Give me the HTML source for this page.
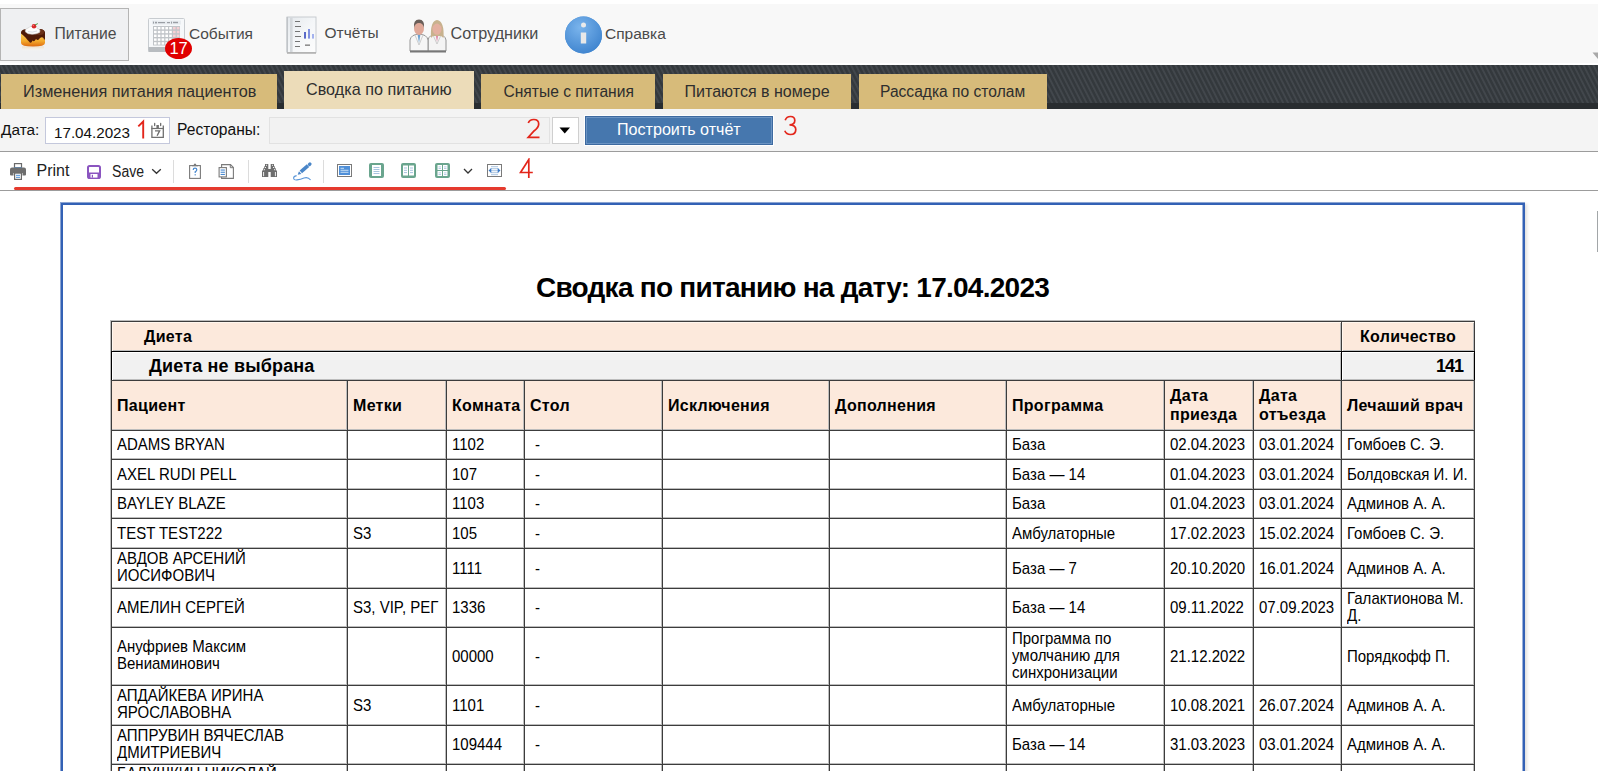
<!DOCTYPE html><html><head><meta charset="utf-8"><style>

*{margin:0;padding:0;box-sizing:border-box}
html,body{width:1598px;height:780px;overflow:hidden;background:#fff;font-family:"Liberation Sans",sans-serif;}
.abs{position:absolute}
.t{position:absolute;white-space:nowrap;font-size:15px;line-height:17px;color:#000}
.b{font-weight:bold}
.ui{position:absolute;white-space:nowrap;font-size:15.5px;line-height:18px;color:#333}
.hl{position:absolute;background:#3c3c3c;height:1px}
.vl{position:absolute;background:#3c3c3c;width:1px}

</style></head><body>
<div class="abs" style="left:0;top:4px;width:1598px;height:61px;background:#f8f8f8"></div>
<div class="abs" style="left:0;top:63px;width:1598px;height:2px;background:#fff"></div>
<div class="abs" style="left:0;top:8px;width:129px;height:53px;background:#eff0f2;border:1px solid #b4b4b4"></div>
<div class="ui" style="left:54.5px;top:24.56px;font-size:15.7px;color:#4a4a4a;">Питание</div>
<div class="ui" style="left:189px;top:24.63px;font-size:15.5px;color:#4a4a4a;">События</div>
<div class="ui" style="left:324.5px;top:24.23px;font-size:15.5px;color:#4a4a4a;">Отчёты</div>
<div class="ui" style="left:450.5px;top:24.39px;font-size:16.2px;color:#4a4a4a;">Сотрудники</div>
<div class="ui" style="left:605px;top:24.63px;font-size:15.5px;color:#4a4a4a;">Справка</div>
<svg class="abs" style="left:20px;top:22px" width="26" height="30" viewBox="0 0 26 30">
<defs><linearGradient id="cb" x1="0" y1="0" x2="0" y2="1"><stop offset="0" stop-color="#fcd060"/><stop offset=".6" stop-color="#f3a92a"/><stop offset="1" stop-color="#de6a10"/></linearGradient>
<linearGradient id="rf" x1="0" y1="0" x2="0" y2="1"><stop offset="0" stop-color="#f0d8b0" stop-opacity=".7"/><stop offset="1" stop-color="#fff" stop-opacity="0"/></linearGradient></defs>
<rect x="2" y="24.5" width="22" height="5" fill="url(#rf)"/>
<path d="M1 11 L1 21 Q1 24.5 13 24.5 Q25 24.5 25 21 L25 11Z" fill="url(#cb)"/>
<path d="M1 10.5 Q1 7.5 6 7 L20 7 Q25 7.5 25 10.5 L25 17 Q24 19 23.5 16 Q22 14.5 20 16 Q18 19.5 16 17 Q14 20.5 12.5 18.5 Q11 22.5 9 19.5 Q7 17.5 5.5 15.5 Q3 13 1 11.5Z" fill="#4e1a08"/>
<ellipse cx="19.5" cy="10" rx="4.5" ry="3" fill="#6a3018"/>
<path d="M5.5 10 Q4.5 6.5 8.5 6 Q9.5 3.8 12.5 4.2 Q17 3.8 17.5 6.5 Q21 7 19.5 10.5 Q16 12.5 12 12.3 Q7.5 12.3 5.5 10Z" fill="#fdfdfd" stroke="#c8c8c8" stroke-width=".6"/>
<path d="M8 9.5 Q12 11 17 9" fill="none" stroke="#d8dde4" stroke-width="1"/>
<circle cx="14" cy="4.2" r="2.3" fill="#d82828"/>
<circle cx="13.3" cy="3.6" r=".7" fill="#ff8080"/>
<path d="M15 3 L17.8 1.6" stroke="#4a9a40" stroke-width="1"/>
</svg>
<svg class="abs" style="left:148px;top:18px" width="37" height="35" viewBox="0 0 37 35">
<rect x="0.5" y="0.5" width="36" height="33" rx="1" fill="#f6f8fa" stroke="#c8ccd0"/>
<rect x="0.5" y="29" width="36" height="5" fill="#b8bcc0"/>
<rect x="4" y="2.5" width="29" height="4" fill="#e8ecf0"/><g fill="#9a9ea4"><rect x="5" y="3.6" width="1" height="2"/><rect x="7" y="3.8" width="2" height="1.6"/><rect x="10" y="4" width="7" height="1.2"/><rect x="19" y="4" width="3" height="1.2"/><rect x="23" y="3.6" width="1" height="2"/><rect x="25" y="3.8" width="5" height="1.4"/></g>
<rect x="5" y="8" width="27" height="19.5" fill="#c0c4c8"/>
<rect x="6.0" y="9.0" width="2.6" height="2.4" fill="#fff"/><rect x="9.8" y="9.0" width="2.6" height="2.4" fill="#fff"/><rect x="13.6" y="9.0" width="2.6" height="2.4" fill="#fff"/><rect x="17.4" y="9.0" width="2.6" height="2.4" fill="#fff"/><rect x="21.2" y="9.0" width="2.6" height="2.4" fill="#fff"/><rect x="25.0" y="9.0" width="2.6" height="2.4" fill="#f6d0d4"/><rect x="28.8" y="9.0" width="2.6" height="2.4" fill="#f6d0d4"/><rect x="6.0" y="12.8" width="2.6" height="2.4" fill="#fff"/><rect x="9.8" y="12.8" width="2.6" height="2.4" fill="#fff"/><rect x="13.6" y="12.8" width="2.6" height="2.4" fill="#fff"/><rect x="17.4" y="12.8" width="2.6" height="2.4" fill="#fff"/><rect x="21.2" y="12.8" width="2.6" height="2.4" fill="#fff"/><rect x="25.0" y="12.8" width="2.6" height="2.4" fill="#f6d0d4"/><rect x="28.8" y="12.8" width="2.6" height="2.4" fill="#f6d0d4"/><rect x="6.0" y="16.6" width="2.6" height="2.4" fill="#fff"/><rect x="9.8" y="16.6" width="2.6" height="2.4" fill="#fff"/><rect x="13.6" y="16.6" width="2.6" height="2.4" fill="#fff"/><rect x="17.4" y="16.6" width="2.6" height="2.4" fill="#fff"/><rect x="21.2" y="16.6" width="2.6" height="2.4" fill="#fff"/><rect x="25.0" y="16.6" width="2.6" height="2.4" fill="#f6d0d4"/><rect x="28.8" y="16.6" width="2.6" height="2.4" fill="#f6d0d4"/><rect x="6.0" y="20.4" width="2.6" height="2.4" fill="#fff"/><rect x="9.8" y="20.4" width="2.6" height="2.4" fill="#fff"/><rect x="13.6" y="20.4" width="2.6" height="2.4" fill="#fff"/><rect x="17.4" y="20.4" width="2.6" height="2.4" fill="#fff"/><rect x="21.2" y="20.4" width="2.6" height="2.4" fill="#fff"/><rect x="25.0" y="20.4" width="2.6" height="2.4" fill="#f6d0d4"/><rect x="28.8" y="20.4" width="2.6" height="2.4" fill="#f6d0d4"/><rect x="6.0" y="24.2" width="2.6" height="2.4" fill="#fff"/><rect x="9.8" y="24.2" width="2.6" height="2.4" fill="#fff"/><rect x="13.6" y="24.2" width="2.6" height="2.4" fill="#fff"/><rect x="17.4" y="24.2" width="2.6" height="2.4" fill="#fff"/><rect x="21.2" y="24.2" width="2.6" height="2.4" fill="#fff"/><rect x="25.0" y="24.2" width="2.6" height="2.4" fill="#f6d0d4"/><rect x="28.8" y="24.2" width="2.6" height="2.4" fill="#f6d0d4"/>
</svg>
<div class="abs" style="left:165px;top:38px;width:27px;height:21px;border-radius:50%;background:#e00000"></div>
<div class="abs" style="left:165px;top:38px;width:27px;height:21px;color:#fff;font-size:16.5px;line-height:21px;text-align:center;letter-spacing:-0.3px">17</div>
<svg class="abs" style="left:286px;top:16px" width="31" height="38" viewBox="0 0 31 38">
<defs><linearGradient id="rg" x1="0" y1="0" x2="1" y2="1"><stop offset="0" stop-color="#e4e8ec"/><stop offset=".5" stop-color="#f4f6f8"/><stop offset="1" stop-color="#fdfdfd"/></linearGradient></defs>
<rect x="1" y="1" width="29" height="35.5" fill="url(#rg)" stroke="#c4c8cc" stroke-width=".9"/>
<rect x="1" y="36" width="29" height="1.8" fill="#b4b4b4"/>
<rect x="0.5" y="1" width="1.5" height="35" fill="#c0c4c8"/>
<rect x="4" y="1.5" width="2.6" height="34.5" fill="#d4d8dc"/>
<g fill="#666"><rect x="9" y="5" width="5" height=".9"/><rect x="9" y="10" width="6" height=".9"/><rect x="9" y="15" width="5" height=".9"/><rect x="9" y="20" width="6" height=".9"/><rect x="9" y="25" width="5" height=".9"/><rect x="9" y="30" width="5" height=".9"/></g>
<rect x="18" y="16" width="2" height="6.6" fill="#5a6ac8"/><rect x="22" y="13" width="2" height="9.6" fill="#8090e0"/><rect x="26" y="18" width="2" height="4.6" fill="#a4b2ee"/>
<rect x="19" y="28.5" width="5" height="1.3" fill="#777"/>
</svg>
<svg class="abs" style="left:409px;top:18px" width="38" height="35" viewBox="0 0 38 35">
<path d="M19 33 L19 22 Q20 16.5 28 16 Q36 16.5 37 22 L37 33Z" fill="#f4f4f4" stroke="#8a8a8a" stroke-width=".9"/>
<path d="M1 33 L1 22 Q2 16.5 10 16 Q18 16.5 19 22 L19 33Z" fill="#f6f6f6" stroke="#8a8a8a" stroke-width=".9"/>
<rect x="1" y="32.5" width="36" height="2" fill="#777"/>
<path d="M8.5 16 L10 25 L11.5 16Z" fill="#6aa0d0"/><path d="M26.5 16 L28 24 L29.5 16Z" fill="#e08aa8"/>
<path d="M6 17 L10 27 L14 17" fill="none" stroke="#bbb" stroke-width=".7"/>
<path d="M24 17 L28 26 L32 17" fill="none" stroke="#bbb" stroke-width=".7"/>
<path d="M22 20 Q21 3 28 2 Q35.5 3 34.5 20 L32 18 L24 18Z" fill="#c8b28e"/>
<ellipse cx="28" cy="10.5" rx="4.6" ry="6.3" fill="#e4b0a0"/>
<path d="M23.5 9 Q23.5 3 28 3 Q32.5 3 32.5 9 Q30 5.5 28 5.5 Q25.5 5.5 23.5 9Z" fill="#c8b28e"/>
<ellipse cx="10" cy="10.5" rx="5" ry="6.5" fill="#e0a898"/>
<path d="M5 10 Q4 1.5 10 1.5 Q16 1.5 15 10 Q14 5 10 5 Q6 5 5 10Z" fill="#6a5e58"/>
</svg>
<svg class="abs" style="left:564px;top:16px" width="39" height="38" viewBox="0 0 39 38">
<circle cx="19.5" cy="19" r="18.5" fill="#4a90d8"/>
<circle cx="19.5" cy="19" r="18.5" fill="url(#ig)"/>
<defs><radialGradient id="ig" cx=".4" cy=".3" r=".8"><stop offset="0" stop-color="#7ab4ec"/><stop offset="1" stop-color="#3a80cc"/></radialGradient></defs>
<circle cx="19.5" cy="9" r="2.5" fill="#eaeaea"/>
<rect x="16.8" y="16.5" width="5.4" height="11" fill="#e8e8e8"/>
</svg>
<svg class="abs" style="left:1592px;top:52px" width="8" height="8" viewBox="0 0 8 8"><path d="M0.5 0.5 L10 0.5 L6 7Z" fill="#a8a8a8"/></svg>
<div class="abs" style="left:0;top:65px;width:1598px;height:44px;background:repeating-linear-gradient(63deg,#33383c 0px,#34393d 1.6px,#42474c 2.4px,#42474c 3.4px,#33383c 4.38px)"></div>
<div class="abs" style="left:0;top:103px;width:1598px;height:6px;background:#292d30"></div>
<div class="abs" style="left:1px;top:74px;width:276px;height:35px;background:#d7bb7a"></div>
<div class="ui" style="left:23px;top:82.37px;font-size:16.25px;color:#2e2e2e;">Изменения питания пациентов</div>
<div class="abs" style="left:284px;top:71px;width:190px;height:38px;background:#ecdcb9"></div>
<div class="ui" style="left:306px;top:80.39px;font-size:16.2px;color:#2e2e2e;">Сводка по питанию</div>
<div class="abs" style="left:481px;top:74px;width:174px;height:35px;background:#d7bb7a"></div>
<div class="ui" style="left:503.5px;top:82.59px;font-size:15.6px;color:#2e2e2e;">Снятые с питания</div>
<div class="abs" style="left:663px;top:74px;width:188px;height:35px;background:#d7bb7a"></div>
<div class="ui" style="left:684.5px;top:82.44px;font-size:16.05px;color:#2e2e2e;">Питаются в номере</div>
<div class="abs" style="left:859px;top:74px;width:188px;height:35px;background:#d7bb7a"></div>
<div class="ui" style="left:880px;top:82.59px;font-size:15.6px;color:#2e2e2e;">Рассадка по столам</div>
<div class="abs" style="left:0;top:109px;width:1598px;height:42px;background:#f4f4f4"></div>
<div class="abs" style="left:0;top:151px;width:1598px;height:1px;background:#9c9c9c"></div>
<div class="ui" style="left:1px;top:120.66px;font-size:15.4px;color:#111;">Дата:</div>
<div class="abs" style="left:45px;top:117px;width:125px;height:27px;background:#fff;border:1px solid #c4c8dc"></div>
<div class="ui" style="left:54px;top:123.73px;font-size:15.2px;color:#111;">17.04.2023</div>
<svg class="abs" style="left:136px;top:119px" width="10" height="22" viewBox="0 0 10 22"><path d="M2.3 7.4 L7.2 2.6 L7.2 19.6" fill="none" stroke="#e3261b" stroke-width="1.9"/></svg>
<svg class="abs" style="left:150px;top:122px" width="15" height="17" viewBox="0 0 15 17">
<path d="M1.9 3.5 L1.9 15.4 L13.3 15.4 L13.3 3.5" fill="none" stroke="#707070" stroke-width="1.3"/>
<rect x="1.3" y="5.9" width="12.6" height="1.2" fill="#707070"/>
<rect x="4" y="0.8" width="1.3" height="3.4" rx=".6" fill="#707070"/><rect x="10" y="0.8" width="1.3" height="3.4" rx=".6" fill="#707070"/>
<rect x="6.4" y="3" width="2.5" height="3" fill="#707070"/>
<path d="M5 8.9 L9.6 8.9 L7.1 13.8" fill="none" stroke="#707070" stroke-width="1.4"/>
</svg>
<div class="ui" style="left:177px;top:120.59px;font-size:15.6px;color:#111;">Рестораны:</div>
<div class="abs" style="left:269px;top:117px;width:281px;height:27px;background:#f2f2f2;border:1px solid #e2e2e2"></div>
<svg class="abs" style="left:526px;top:118px" width="16" height="22" viewBox="0 0 16 22"><path d="M2.3 5 Q3.5 1.5 7.8 1.5 Q12.7 1.5 12.7 6 Q12.7 9.5 8 13 L2.2 19.3 L13.5 19.3" fill="none" stroke="#e3261b" stroke-width="1.7"/></svg>
<div class="abs" style="left:552px;top:117px;width:27px;height:27px;background:#fff;border:1px solid #cfcfcf"></div>
<svg class="abs" style="left:559px;top:127px" width="12" height="7" viewBox="0 0 12 7"><path d="M0.5 0.5 L11 0.5 L5.75 6.5Z" fill="#000"/></svg>
<div class="abs" style="left:584px;top:115px;width:190px;height:31px;background:#fff"></div>
<div class="abs" style="left:585px;top:116px;width:188px;height:29px;background:#4677ae;border:1px solid #3d6aa0;box-shadow:inset 0 0 0 1px #6b93c2"></div>
<div class="ui" style="left:617px;top:120.42px;font-size:16.1px;color:#fff;">Построить отчёт</div>
<svg class="abs" style="left:783px;top:115px" width="16" height="22" viewBox="0 0 16 22"><path d="M2.2 5.2 Q3.5 1.5 7.5 1.5 Q11.8 1.5 11.8 5.5 Q11.8 9.5 6.5 9.8 Q12.8 10 12.8 14.5 Q12.8 19.5 7.5 19.5 Q3.2 19.5 1.8 15.8" fill="none" stroke="#e3261b" stroke-width="1.7"/></svg>
<div class="abs" style="left:0;top:152px;width:1598px;height:38px;background:#fff"></div>
<div class="abs" style="left:0;top:190px;width:1598px;height:1px;background:#9c9c9c"></div>
<div class="abs" style="left:14px;top:187px;width:492px;height:3px;background:#e53a2e;border-radius:2px"></div>
<svg class="abs" style="left:10px;top:163px" width="16" height="17" viewBox="0 0 16 17">
<rect x="4.5" y="0.6" width="7" height="4.6" fill="#fff" stroke="#6a6a6a" stroke-width="1.2"/>
<rect x="4" y="4.2" width="8" height="1" fill="#4a90d8"/>
<path d="M2 4.5 L14 4.5 Q16 4.5 16 6.5 L16 11.5 Q16 12.5 15 12.5 L12.5 12.5 L12.5 10 L3.5 10 L3.5 12.5 L1 12.5 Q0 12.5 0 11.5 L0 6.5 Q0 4.5 2 4.5Z" fill="#6e6e6e"/>
<rect x="4.6" y="10.1" width="6.8" height="6.3" fill="#fff" stroke="#6a6a6a" stroke-width="1.2"/>
<rect x="6" y="11.8" width="4" height="1" fill="#4a90d8"/><rect x="6" y="13.8" width="4" height="1" fill="#4a90d8"/>
</svg>
<div class="ui" style="left:36.5px;top:162.46px;font-size:16px;color:#222;">Print</div>
<svg class="abs" style="left:87px;top:165px" width="14" height="14" viewBox="0 0 14 14">
<rect x="1" y="1" width="12" height="12" rx="1.6" fill="none" stroke="#8b55c0" stroke-width="2"/>
<rect x="2" y="7.5" width="10" height="5.5" fill="#8b55c0"/>
<rect x="3.5" y="9" width="7" height="3.6" fill="#fff"/>
<rect x="4.8" y="9.8" width="1.2" height="2.8" fill="#8b55c0"/>
</svg>
<div class="ui" style="left:112px;top:162.53px;font-size:15.8px;color:#222;transform:scaleX(0.89);transform-origin:0 0;">Save</div>
<svg class="abs" style="left:151px;top:168px" width="11" height="7" viewBox="0 0 11 7"><path d="M1.2 1.2 L5.5 5.3 L9.8 1.2" fill="none" stroke="#333" stroke-width="1.3"/></svg>
<div class="abs" style="left:173px;top:160px;width:1px;height:23px;background:#dcdcdc"></div>
<div class="abs" style="left:248px;top:160px;width:1px;height:23px;background:#dcdcdc"></div>
<div class="abs" style="left:323px;top:160px;width:1px;height:23px;background:#dcdcdc"></div>
<svg class="abs" style="left:189px;top:163px" width="12" height="16" viewBox="0 0 12 16">
<rect x="0.6" y="2.6" width="10.8" height="12.8" fill="#fff" stroke="#7a7a7a" stroke-width="1.1"/>
<path d="M3 3.2 L9 3.2 L9 2 L7.3 2 Q7.3 0.4 6 0.4 Q4.7 0.4 4.7 2 L3 2Z" fill="#7a7a7a"/>
<path d="M4.2 7 Q4.2 5.2 6 5.2 Q7.8 5.2 7.8 6.8 Q7.8 8 6.2 8.7 L6.2 10" fill="none" stroke="#4a8ad0" stroke-width="1.2"/>
<rect x="5.6" y="11.2" width="1.2" height="1.2" fill="#4a8ad0"/>
</svg>
<svg class="abs" style="left:218px;top:163px" width="17" height="17" viewBox="0 0 17 17">
<path d="M3.6 1.6 L12.5 1.6 L15.4 4.5 L15.4 15.4 L3.6 15.4Z" fill="#fff" stroke="#7a7a7a" stroke-width="1.1"/>
<path d="M12.3 1.6 L12.3 4.7 L15.4 4.7" fill="none" stroke="#7a7a7a" stroke-width="1"/>
<rect x="1.1" y="4.6" width="7.3" height="9.3" fill="#fff" stroke="#7a7a7a" stroke-width="1.1"/>
<g fill="#4a8ad0"><rect x="2.6" y="6.5" width="4.3" height="1.1"/><rect x="2.6" y="8.7" width="4.3" height="1.1"/><rect x="2.6" y="10.9" width="4.3" height="1.1"/></g>
</svg>
<svg class="abs" style="left:262px;top:164px" width="15" height="13" viewBox="0 0 15 13">
<path d="M3 0 H6.3 V5 H8.7 V0 H12 V2.3 H12.8 V4.3 H13.8 V6.6 H15 V13 H8.7 V8 H6.3 V13 H0 V6.6 H1.2 V4.3 H2.2 V2.3 H3 Z" fill="#6e6e6e"/>
<g fill="#fff" opacity=".9"><rect x="1.1" y="8" width="1" height="4.2"/><rect x="12.9" y="8" width="1" height="4.2"/><rect x="4" y="0.8" width="1" height="1"/><rect x="10" y="0.8" width="1" height="1"/><rect x="3" y="3" width="1" height="1"/><rect x="11" y="3" width="1" height="1"/><rect x="2" y="5.2" width="1" height="1"/><rect x="12" y="5.2" width="1" height="1"/></g>
</svg>
<svg class="abs" style="left:292px;top:161px" width="20" height="20" viewBox="0 0 20 20">
<path d="M5.7 13.7 L6.99 10.17 L9.35 12.89Z" fill="#4a86c8"/>
<path d="M8.84 10.94 L16.02 4.71" stroke="#4a86c8" stroke-width="3.6"/>
<path d="M17.5 3.4 L17.9 3.05" stroke="#4a86c8" stroke-width="3.3" stroke-linecap="round"/>
<path d="M4.6 14.6 Q1.6 15.2 1.6 17 Q1.7 19.3 5 18.9 Q8.5 18.5 12 17 Q16 15.6 18.6 19" fill="none" stroke="#5a96d8" stroke-width="1.1"/>
</svg>
<svg class="abs" style="left:337px;top:164px" width="15" height="13" viewBox="0 0 15 13">
<rect x="0.5" y="0.5" width="14" height="12" fill="#fff" stroke="#7a7a7a" stroke-width="1"/>
<rect x="2" y="2" width="11" height="9" fill="#4f8fd8"/>
<g fill="#d8e8f8"><rect x="3.5" y="3.8" width="3.5" height="0.9"/><rect x="3.5" y="5.8" width="8" height="0.9"/><rect x="3.5" y="7.8" width="8" height="0.9"/></g>
</svg>
<svg class="abs" style="left:369px;top:163px" width="15" height="15" viewBox="0 0 15 15"><rect x="0" y="0" width="15" height="15" rx="2" fill="#6aa58e"/><rect x="3" y="2" width="9" height="11" fill="#fff"/><g fill="#a8c4e0"><rect x="4.5" y="4" width="6" height="1"/><rect x="4.5" y="6" width="6" height="1"/><rect x="4.5" y="8" width="6" height="1"/><rect x="4.5" y="10" width="6" height="1"/></g></svg>
<svg class="abs" style="left:401px;top:163px" width="15" height="15" viewBox="0 0 15 15"><rect x="0" y="0" width="15" height="15" rx="2" fill="#6aa58e"/><rect x="2" y="2.5" width="5" height="10" fill="#fff"/><rect x="8" y="2.5" width="5" height="10" fill="#fff"/><g fill="#a8c4e0"><rect x="3" y="4.5" width="3" height="1"/><rect x="3" y="6.8" width="3" height="1"/><rect x="3" y="9.1" width="3" height="1"/><rect x="9" y="4.5" width="3" height="1"/><rect x="9" y="6.8" width="3" height="1"/><rect x="9" y="9.1" width="3" height="1"/></g></svg>
<svg class="abs" style="left:435px;top:163px" width="15" height="15" viewBox="0 0 15 15"><rect x="0" y="0" width="15" height="15" rx="2" fill="#6aa58e"/><rect x="2.5" y="2" width="4.5" height="5" fill="#fff"/><rect x="8" y="2" width="4.5" height="5" fill="#fff"/><rect x="2.5" y="8" width="4.5" height="5" fill="#fff"/><rect x="8" y="8" width="4.5" height="5" fill="#fff"/><g fill="#a8c4e0"><rect x="3.5" y="3.5" width="2.5" height="0.8"/><rect x="3.5" y="5" width="2.5" height="0.8"/><rect x="9" y="3.5" width="2.5" height="0.8"/><rect x="9" y="5" width="2.5" height="0.8"/><rect x="3.5" y="9.5" width="2.5" height="0.8"/><rect x="3.5" y="11" width="2.5" height="0.8"/><rect x="9" y="9.5" width="2.5" height="0.8"/><rect x="9" y="11" width="2.5" height="0.8"/></g></svg>
<svg class="abs" style="left:463px;top:168px" width="10" height="6" viewBox="0 0 10 6"><path d="M1 1 L5 5 L9 1" fill="none" stroke="#333" stroke-width="1.3"/></svg>
<svg class="abs" style="left:487px;top:164px" width="15" height="13" viewBox="0 0 15 13">
<rect x="0.5" y="0.5" width="14" height="12" fill="#fff" stroke="#7a7a7a" stroke-width="1"/>
<g fill="#a8c4e0"><rect x="4" y="2.2" width="7" height="1"/><rect x="3.5" y="4.2" width="8" height="1"/><rect x="3.5" y="6.2" width="8" height="1"/><rect x="3.5" y="8.2" width="8" height="1"/><rect x="4" y="10.2" width="7" height="1"/></g>
<path d="M1.5 6.5 L4.3 4 L4.3 9Z M13.5 6.5 L10.7 4 L10.7 9Z" fill="#3a7ac8"/>
</svg>
<svg class="abs" style="left:519px;top:158px" width="16" height="22" viewBox="0 0 16 22"><path d="M9.8 20 L9.8 1.5 L1.5 14.5 L13.8 14.5" fill="none" stroke="#e3261b" stroke-width="1.7"/></svg>
<div class="abs" style="left:1597px;top:211px;width:1px;height:41px;background:#a2a6a8"></div>
<div class="abs" style="left:0;top:191px;width:1598px;height:580px;overflow:hidden">
<div class="abs" style="left:61px;top:12px;width:1464px;height:700px;border:2px solid #3361b5;box-shadow:2px 1px 3px rgba(60,50,40,.16)"></div>
<div class="abs" style="left:60px;top:11px;width:1px;height:700px;background:#8ba4d2"></div>
<div class="abs" style="left:60px;top:11px;width:1465px;height:1px;background:#8ba4d2"></div>
<div class="abs" style="left:1522px;top:14px;width:1px;height:700px;background:#9ab0da"></div>
<div class="t b" style="left:536px;top:88.25px;font-size:28px;color:#000;letter-spacing:-0.74px;">Сводка по питанию на дату: 17.04.2023</div>
<div class="abs" style="left:111px;top:130px;width:1363px;height:30px;background:#fce9dc"></div>
<div class="abs" style="left:111px;top:160px;width:1363px;height:29px;background:#f1f1f1"></div>
<div class="abs" style="left:111px;top:189px;width:1363px;height:50px;background:#fce9dc"></div>
<div class="abs" style="left:110px;top:129px;width:1365px;height:1px;background:#bdbdbd"></div>
<div class="abs" style="left:110px;top:159px;width:1365px;height:1px;background:#bdbdbd"></div>
<div class="abs" style="left:110px;top:188px;width:1365px;height:1px;background:#bdbdbd"></div>
<div class="abs" style="left:110px;top:238px;width:1365px;height:1px;background:#bdbdbd"></div>
<div class="abs" style="left:110px;top:267px;width:1365px;height:1px;background:#bdbdbd"></div>
<div class="abs" style="left:110px;top:297px;width:1365px;height:1px;background:#bdbdbd"></div>
<div class="abs" style="left:110px;top:326px;width:1365px;height:1px;background:#bdbdbd"></div>
<div class="abs" style="left:110px;top:356px;width:1365px;height:1px;background:#bdbdbd"></div>
<div class="abs" style="left:110px;top:396px;width:1365px;height:1px;background:#bdbdbd"></div>
<div class="abs" style="left:110px;top:435px;width:1365px;height:1px;background:#bdbdbd"></div>
<div class="abs" style="left:110px;top:493px;width:1365px;height:1px;background:#bdbdbd"></div>
<div class="abs" style="left:110px;top:533px;width:1365px;height:1px;background:#bdbdbd"></div>
<div class="abs" style="left:110px;top:572px;width:1365px;height:1px;background:#bdbdbd"></div>
<div class="abs" style="left:110px;top:129px;width:1px;height:480px;background:#bdbdbd"></div>
<div class="abs" style="left:1473px;top:130px;width:1px;height:479px;background:#bdbdbd"></div>
<div class="abs" style="left:1340px;top:130px;width:1px;height:59px;background:#bdbdbd"></div>
<div class="abs" style="left:346px;top:189px;width:1px;height:420px;background:#bdbdbd"></div>
<div class="abs" style="left:445px;top:189px;width:1px;height:420px;background:#bdbdbd"></div>
<div class="abs" style="left:523px;top:189px;width:1px;height:420px;background:#bdbdbd"></div>
<div class="abs" style="left:661px;top:189px;width:1px;height:420px;background:#bdbdbd"></div>
<div class="abs" style="left:828px;top:189px;width:1px;height:420px;background:#bdbdbd"></div>
<div class="abs" style="left:1005px;top:189px;width:1px;height:420px;background:#bdbdbd"></div>
<div class="abs" style="left:1163px;top:189px;width:1px;height:420px;background:#bdbdbd"></div>
<div class="abs" style="left:1252px;top:189px;width:1px;height:420px;background:#bdbdbd"></div>
<div class="abs" style="left:1340px;top:189px;width:1px;height:420px;background:#bdbdbd"></div>
<div class="abs" style="left:112px;top:131px;width:1362px;height:1px;background:#fff6ee"></div>
<div class="abs" style="left:112px;top:131px;width:1px;height:29px;background:#fff6ee"></div>
<div class="abs" style="left:1342px;top:131px;width:1px;height:29px;background:#fff6ee"></div>
<div class="abs" style="left:112px;top:161px;width:1362px;height:1px;background:#fff"></div>
<div class="abs" style="left:112px;top:161px;width:1px;height:28px;background:#fff"></div>
<div class="abs" style="left:1342px;top:161px;width:1px;height:28px;background:#fff"></div>
<div class="abs" style="left:111px;top:130px;width:1364px;height:1px;background:#3c3c3c"></div>
<div class="abs" style="left:111px;top:160px;width:1364px;height:1px;background:#3c3c3c"></div>
<div class="abs" style="left:111px;top:189px;width:1364px;height:1px;background:#3c3c3c"></div>
<div class="abs" style="left:111px;top:239px;width:1364px;height:1px;background:#3c3c3c"></div>
<div class="abs" style="left:111px;top:268px;width:1364px;height:1px;background:#3c3c3c"></div>
<div class="abs" style="left:111px;top:298px;width:1364px;height:1px;background:#3c3c3c"></div>
<div class="abs" style="left:111px;top:327px;width:1364px;height:1px;background:#3c3c3c"></div>
<div class="abs" style="left:111px;top:357px;width:1364px;height:1px;background:#3c3c3c"></div>
<div class="abs" style="left:111px;top:397px;width:1364px;height:1px;background:#3c3c3c"></div>
<div class="abs" style="left:111px;top:436px;width:1364px;height:1px;background:#3c3c3c"></div>
<div class="abs" style="left:111px;top:494px;width:1364px;height:1px;background:#3c3c3c"></div>
<div class="abs" style="left:111px;top:534px;width:1364px;height:1px;background:#3c3c3c"></div>
<div class="abs" style="left:111px;top:573px;width:1364px;height:1px;background:#3c3c3c"></div>
<div class="abs" style="left:111px;top:160px;width:1364px;height:1px;background:#000"></div>
<div class="abs" style="left:111px;top:130px;width:1px;height:479px;background:#3c3c3c"></div>
<div class="abs" style="left:1474px;top:130px;width:1px;height:479px;background:#3c3c3c"></div>
<div class="abs" style="left:1341px;top:130px;width:1px;height:59px;background:#3c3c3c"></div>
<div class="abs" style="left:111px;top:160px;width:1px;height:29px;background:#000"></div>
<div class="abs" style="left:1341px;top:160px;width:1px;height:29px;background:#000"></div>
<div class="abs" style="left:1474px;top:160px;width:1px;height:29px;background:#000"></div>
<div class="abs" style="left:347px;top:189px;width:1px;height:420px;background:#3c3c3c"></div>
<div class="abs" style="left:446px;top:189px;width:1px;height:420px;background:#3c3c3c"></div>
<div class="abs" style="left:524px;top:189px;width:1px;height:420px;background:#3c3c3c"></div>
<div class="abs" style="left:662px;top:189px;width:1px;height:420px;background:#3c3c3c"></div>
<div class="abs" style="left:829px;top:189px;width:1px;height:420px;background:#3c3c3c"></div>
<div class="abs" style="left:1006px;top:189px;width:1px;height:420px;background:#3c3c3c"></div>
<div class="abs" style="left:1164px;top:189px;width:1px;height:420px;background:#3c3c3c"></div>
<div class="abs" style="left:1253px;top:189px;width:1px;height:420px;background:#3c3c3c"></div>
<div class="abs" style="left:1341px;top:189px;width:1px;height:420px;background:#3c3c3c"></div>
<div class="t b" style="left:144px;top:137.21px;font-size:16px;color:#000;letter-spacing:0.28px;">Диета</div>
<div class="t b" style="left:1360px;top:137.21px;font-size:16px;color:#000;letter-spacing:0.28px;">Количество</div>
<div class="t b" style="left:149px;top:166.65px;font-size:18px;color:#000;letter-spacing:0.17px;">Диета не выбрана</div>
<div class="t b" style="right:135px;top:166.65px;font-size:18px;color:#000;letter-spacing:-1px;">141</div>
<div class="t b" style="left:117px;top:205.81px;font-size:16px;color:#000;letter-spacing:0.3px;">Пациент</div>
<div class="t b" style="left:353px;top:205.81px;font-size:16px;color:#000;letter-spacing:0.3px;">Метки</div>
<div class="t b" style="left:452px;top:205.81px;font-size:16px;color:#000;letter-spacing:0.3px;">Комната</div>
<div class="t b" style="left:530px;top:205.81px;font-size:16px;color:#000;letter-spacing:0.3px;">Стол</div>
<div class="t b" style="left:668px;top:205.81px;font-size:16px;color:#000;letter-spacing:0.3px;">Исключения</div>
<div class="t b" style="left:835px;top:205.81px;font-size:16px;color:#000;letter-spacing:0.3px;">Дополнения</div>
<div class="t b" style="left:1012px;top:205.81px;font-size:16px;color:#000;letter-spacing:0.3px;">Программа</div>
<div class="t b" style="left:1347px;top:205.81px;font-size:16px;color:#000;letter-spacing:0.3px;">Лечаший врач</div>
<div class="t b" style="left:1170px;top:196.31px;font-size:16px;color:#000;letter-spacing:0.3px;">Дата</div>
<div class="t b" style="left:1170px;top:215.01px;font-size:16px;color:#000;letter-spacing:0.3px;">приезда</div>
<div class="t b" style="left:1259px;top:196.31px;font-size:16px;color:#000;letter-spacing:0.3px;">Дата</div>
<div class="t b" style="left:1259px;top:215.01px;font-size:16px;color:#000;letter-spacing:0.3px;">отъезда</div>
<div class="t" style="left:117px;top:245.39px;font-size:15px;color:#000;letter-spacing:0px;transform:scaleY(1.075);transform-origin:0 13.46px;">ADAMS BRYAN</div>
<div class="t" style="left:452px;top:245.39px;font-size:15px;color:#000;letter-spacing:0px;transform:scaleY(1.075);transform-origin:0 13.46px;">1102</div>
<div class="t" style="left:1012px;top:245.39px;font-size:15px;color:#000;letter-spacing:0px;transform:scaleY(1.075);transform-origin:0 13.46px;">База</div>
<div class="t" style="left:1170px;top:245.39px;font-size:15px;color:#000;letter-spacing:0px;transform:scaleY(1.075);transform-origin:0 13.46px;">02.04.2023</div>
<div class="t" style="left:1259px;top:245.39px;font-size:15px;color:#000;letter-spacing:0px;transform:scaleY(1.075);transform-origin:0 13.46px;">03.01.2024</div>
<div class="t" style="left:1347px;top:245.39px;font-size:15px;color:#000;letter-spacing:0px;transform:scaleY(1.075);transform-origin:0 13.46px;">Гомбоев С. Э.</div>
<div class="t" style="left:535px;top:245.39px;font-size:15px;color:#000;letter-spacing:0px;transform:scaleY(1.075);transform-origin:0 13.46px;">-</div>
<div class="t" style="left:117px;top:274.89px;font-size:15px;color:#000;letter-spacing:0px;transform:scaleY(1.075);transform-origin:0 13.46px;">AXEL RUDI PELL</div>
<div class="t" style="left:452px;top:274.89px;font-size:15px;color:#000;letter-spacing:0px;transform:scaleY(1.075);transform-origin:0 13.46px;">107</div>
<div class="t" style="left:1012px;top:274.89px;font-size:15px;color:#000;letter-spacing:0px;transform:scaleY(1.075);transform-origin:0 13.46px;">База — 14</div>
<div class="t" style="left:1170px;top:274.89px;font-size:15px;color:#000;letter-spacing:0px;transform:scaleY(1.075);transform-origin:0 13.46px;">01.04.2023</div>
<div class="t" style="left:1259px;top:274.89px;font-size:15px;color:#000;letter-spacing:0px;transform:scaleY(1.075);transform-origin:0 13.46px;">03.01.2024</div>
<div class="t" style="left:1347px;top:274.89px;font-size:15px;color:#000;letter-spacing:0px;transform:scaleY(1.075);transform-origin:0 13.46px;">Болдовская И. И.</div>
<div class="t" style="left:535px;top:274.89px;font-size:15px;color:#000;letter-spacing:0px;transform:scaleY(1.075);transform-origin:0 13.46px;">-</div>
<div class="t" style="left:117px;top:304.39px;font-size:15px;color:#000;letter-spacing:0px;transform:scaleY(1.075);transform-origin:0 13.46px;">BAYLEY BLAZE</div>
<div class="t" style="left:452px;top:304.39px;font-size:15px;color:#000;letter-spacing:0px;transform:scaleY(1.075);transform-origin:0 13.46px;">1103</div>
<div class="t" style="left:1012px;top:304.39px;font-size:15px;color:#000;letter-spacing:0px;transform:scaleY(1.075);transform-origin:0 13.46px;">База</div>
<div class="t" style="left:1170px;top:304.39px;font-size:15px;color:#000;letter-spacing:0px;transform:scaleY(1.075);transform-origin:0 13.46px;">01.04.2023</div>
<div class="t" style="left:1259px;top:304.39px;font-size:15px;color:#000;letter-spacing:0px;transform:scaleY(1.075);transform-origin:0 13.46px;">03.01.2024</div>
<div class="t" style="left:1347px;top:304.39px;font-size:15px;color:#000;letter-spacing:0px;transform:scaleY(1.075);transform-origin:0 13.46px;">Админов А. А.</div>
<div class="t" style="left:535px;top:304.39px;font-size:15px;color:#000;letter-spacing:0px;transform:scaleY(1.075);transform-origin:0 13.46px;">-</div>
<div class="t" style="left:117px;top:333.89px;font-size:15px;color:#000;letter-spacing:0px;transform:scaleY(1.075);transform-origin:0 13.46px;">TEST TEST222</div>
<div class="t" style="left:353px;top:333.89px;font-size:15px;color:#000;letter-spacing:0px;transform:scaleY(1.075);transform-origin:0 13.46px;">S3</div>
<div class="t" style="left:452px;top:333.89px;font-size:15px;color:#000;letter-spacing:0px;transform:scaleY(1.075);transform-origin:0 13.46px;">105</div>
<div class="t" style="left:1012px;top:333.89px;font-size:15px;color:#000;letter-spacing:0px;transform:scaleY(1.075);transform-origin:0 13.46px;">Амбулаторные</div>
<div class="t" style="left:1170px;top:333.89px;font-size:15px;color:#000;letter-spacing:0px;transform:scaleY(1.075);transform-origin:0 13.46px;">17.02.2023</div>
<div class="t" style="left:1259px;top:333.89px;font-size:15px;color:#000;letter-spacing:0px;transform:scaleY(1.075);transform-origin:0 13.46px;">15.02.2024</div>
<div class="t" style="left:1347px;top:333.89px;font-size:15px;color:#000;letter-spacing:0px;transform:scaleY(1.075);transform-origin:0 13.46px;">Гомбоев С. Э.</div>
<div class="t" style="left:535px;top:333.89px;font-size:15px;color:#000;letter-spacing:0px;transform:scaleY(1.075);transform-origin:0 13.46px;">-</div>
<div class="t" style="left:117px;top:359.39px;font-size:15px;color:#000;letter-spacing:0px;transform:scaleY(1.075);transform-origin:0 13.46px;">АВДОВ АРСЕНИЙ</div>
<div class="t" style="left:117px;top:376.39px;font-size:15px;color:#000;letter-spacing:0px;transform:scaleY(1.075);transform-origin:0 13.46px;">ИОСИФОВИЧ</div>
<div class="t" style="left:452px;top:368.89px;font-size:15px;color:#000;letter-spacing:0px;transform:scaleY(1.075);transform-origin:0 13.46px;">1111</div>
<div class="t" style="left:1012px;top:368.89px;font-size:15px;color:#000;letter-spacing:0px;transform:scaleY(1.075);transform-origin:0 13.46px;">База — 7</div>
<div class="t" style="left:1170px;top:368.89px;font-size:15px;color:#000;letter-spacing:0px;transform:scaleY(1.075);transform-origin:0 13.46px;">20.10.2020</div>
<div class="t" style="left:1259px;top:368.89px;font-size:15px;color:#000;letter-spacing:0px;transform:scaleY(1.075);transform-origin:0 13.46px;">16.01.2024</div>
<div class="t" style="left:1347px;top:368.89px;font-size:15px;color:#000;letter-spacing:0px;transform:scaleY(1.075);transform-origin:0 13.46px;">Админов А. А.</div>
<div class="t" style="left:535px;top:368.89px;font-size:15px;color:#000;letter-spacing:0px;transform:scaleY(1.075);transform-origin:0 13.46px;">-</div>
<div class="t" style="left:117px;top:408.39px;font-size:15px;color:#000;letter-spacing:0px;transform:scaleY(1.075);transform-origin:0 13.46px;">АМЕЛИН СЕРГЕЙ</div>
<div class="t" style="left:353px;top:408.39px;font-size:15px;color:#000;letter-spacing:0px;transform:scaleY(1.075);transform-origin:0 13.46px;">S3, VIP, РЕГ</div>
<div class="t" style="left:452px;top:408.39px;font-size:15px;color:#000;letter-spacing:0px;transform:scaleY(1.075);transform-origin:0 13.46px;">1336</div>
<div class="t" style="left:1012px;top:408.39px;font-size:15px;color:#000;letter-spacing:0px;transform:scaleY(1.075);transform-origin:0 13.46px;">База — 14</div>
<div class="t" style="left:1170px;top:408.39px;font-size:15px;color:#000;letter-spacing:0px;transform:scaleY(1.075);transform-origin:0 13.46px;">09.11.2022</div>
<div class="t" style="left:1259px;top:408.39px;font-size:15px;color:#000;letter-spacing:0px;transform:scaleY(1.075);transform-origin:0 13.46px;">07.09.2023</div>
<div class="t" style="left:1347px;top:398.89px;font-size:15px;color:#000;letter-spacing:0px;transform:scaleY(1.075);transform-origin:0 13.46px;">Галактионова М.</div>
<div class="t" style="left:1347px;top:415.89px;font-size:15px;color:#000;letter-spacing:0px;transform:scaleY(1.075);transform-origin:0 13.46px;">Д.</div>
<div class="t" style="left:535px;top:408.39px;font-size:15px;color:#000;letter-spacing:0px;transform:scaleY(1.075);transform-origin:0 13.46px;">-</div>
<div class="t" style="left:117px;top:447.39px;font-size:15px;color:#000;letter-spacing:0px;transform:scaleY(1.075);transform-origin:0 13.46px;">Ануфриев Максим</div>
<div class="t" style="left:117px;top:464.39px;font-size:15px;color:#000;letter-spacing:0px;transform:scaleY(1.075);transform-origin:0 13.46px;">Вениаминович</div>
<div class="t" style="left:452px;top:456.89px;font-size:15px;color:#000;letter-spacing:0px;transform:scaleY(1.075);transform-origin:0 13.46px;">00000</div>
<div class="t" style="left:1012px;top:438.89px;font-size:15px;color:#000;letter-spacing:0px;transform:scaleY(1.075);transform-origin:0 13.46px;">Программа по</div>
<div class="t" style="left:1012px;top:455.89px;font-size:15px;color:#000;letter-spacing:0px;transform:scaleY(1.075);transform-origin:0 13.46px;">умолчанию для</div>
<div class="t" style="left:1012px;top:472.89px;font-size:15px;color:#000;letter-spacing:0px;transform:scaleY(1.075);transform-origin:0 13.46px;">синхронизации</div>
<div class="t" style="left:1170px;top:456.89px;font-size:15px;color:#000;letter-spacing:0px;transform:scaleY(1.075);transform-origin:0 13.46px;">21.12.2022</div>
<div class="t" style="left:1347px;top:456.89px;font-size:15px;color:#000;letter-spacing:0px;transform:scaleY(1.075);transform-origin:0 13.46px;">Порядкофф П.</div>
<div class="t" style="left:535px;top:456.89px;font-size:15px;color:#000;letter-spacing:0px;transform:scaleY(1.075);transform-origin:0 13.46px;">-</div>
<div class="t" style="left:117px;top:496.39px;font-size:15px;color:#000;letter-spacing:0px;transform:scaleY(1.075);transform-origin:0 13.46px;">АПДАЙКЕВА ИРИНА</div>
<div class="t" style="left:117px;top:513.39px;font-size:15px;color:#000;letter-spacing:0px;transform:scaleY(1.075);transform-origin:0 13.46px;">ЯРОСЛАВОВНА</div>
<div class="t" style="left:353px;top:505.89px;font-size:15px;color:#000;letter-spacing:0px;transform:scaleY(1.075);transform-origin:0 13.46px;">S3</div>
<div class="t" style="left:452px;top:505.89px;font-size:15px;color:#000;letter-spacing:0px;transform:scaleY(1.075);transform-origin:0 13.46px;">1101</div>
<div class="t" style="left:1012px;top:505.89px;font-size:15px;color:#000;letter-spacing:0px;transform:scaleY(1.075);transform-origin:0 13.46px;">Амбулаторные</div>
<div class="t" style="left:1170px;top:505.89px;font-size:15px;color:#000;letter-spacing:0px;transform:scaleY(1.075);transform-origin:0 13.46px;">10.08.2021</div>
<div class="t" style="left:1259px;top:505.89px;font-size:15px;color:#000;letter-spacing:0px;transform:scaleY(1.075);transform-origin:0 13.46px;">26.07.2024</div>
<div class="t" style="left:1347px;top:505.89px;font-size:15px;color:#000;letter-spacing:0px;transform:scaleY(1.075);transform-origin:0 13.46px;">Админов А. А.</div>
<div class="t" style="left:535px;top:505.89px;font-size:15px;color:#000;letter-spacing:0px;transform:scaleY(1.075);transform-origin:0 13.46px;">-</div>
<div class="t" style="left:117px;top:535.89px;font-size:15px;color:#000;letter-spacing:0px;transform:scaleY(1.075);transform-origin:0 13.46px;">АППРУВИН ВЯЧЕСЛАВ</div>
<div class="t" style="left:117px;top:552.89px;font-size:15px;color:#000;letter-spacing:0px;transform:scaleY(1.075);transform-origin:0 13.46px;">ДМИТРИЕВИЧ</div>
<div class="t" style="left:452px;top:545.39px;font-size:15px;color:#000;letter-spacing:0px;transform:scaleY(1.075);transform-origin:0 13.46px;">109444</div>
<div class="t" style="left:1012px;top:545.39px;font-size:15px;color:#000;letter-spacing:0px;transform:scaleY(1.075);transform-origin:0 13.46px;">База — 14</div>
<div class="t" style="left:1170px;top:545.39px;font-size:15px;color:#000;letter-spacing:0px;transform:scaleY(1.075);transform-origin:0 13.46px;">31.03.2023</div>
<div class="t" style="left:1259px;top:545.39px;font-size:15px;color:#000;letter-spacing:0px;transform:scaleY(1.075);transform-origin:0 13.46px;">03.01.2024</div>
<div class="t" style="left:1347px;top:545.39px;font-size:15px;color:#000;letter-spacing:0px;transform:scaleY(1.075);transform-origin:0 13.46px;">Админов А. А.</div>
<div class="t" style="left:535px;top:545.39px;font-size:15px;color:#000;letter-spacing:0px;transform:scaleY(1.075);transform-origin:0 13.46px;">-</div>
<div class="t" style="left:117px;top:574.14px;font-size:15px;color:#000;letter-spacing:0px;transform:scaleY(1.075);transform-origin:0 13.46px;">БАЛУШКИН НИКОЛАЙ</div>
<div class="t" style="left:117px;top:591.14px;font-size:15px;color:#000;letter-spacing:0px;transform:scaleY(1.075);transform-origin:0 13.46px;">ПЕТРОВИЧ</div>
<div class="t" style="left:452px;top:583.64px;font-size:15px;color:#000;letter-spacing:0px;transform:scaleY(1.075);transform-origin:0 13.46px;">1205</div>
<div class="t" style="left:1012px;top:583.64px;font-size:15px;color:#000;letter-spacing:0px;transform:scaleY(1.075);transform-origin:0 13.46px;">База — 14</div>
<div class="t" style="left:1170px;top:583.64px;font-size:15px;color:#000;letter-spacing:0px;transform:scaleY(1.075);transform-origin:0 13.46px;">01.04.2023</div>
<div class="t" style="left:1259px;top:583.64px;font-size:15px;color:#000;letter-spacing:0px;transform:scaleY(1.075);transform-origin:0 13.46px;">03.01.2024</div>
<div class="t" style="left:1347px;top:583.64px;font-size:15px;color:#000;letter-spacing:0px;transform:scaleY(1.075);transform-origin:0 13.46px;">Админов А. А.</div>
<div class="t" style="left:535px;top:583.64px;font-size:15px;color:#000;letter-spacing:0px;transform:scaleY(1.075);transform-origin:0 13.46px;">-</div>
</div>
<div class="abs" style="left:0;top:771px;width:1598px;height:9px;background:#fff"></div>
</body></html>
